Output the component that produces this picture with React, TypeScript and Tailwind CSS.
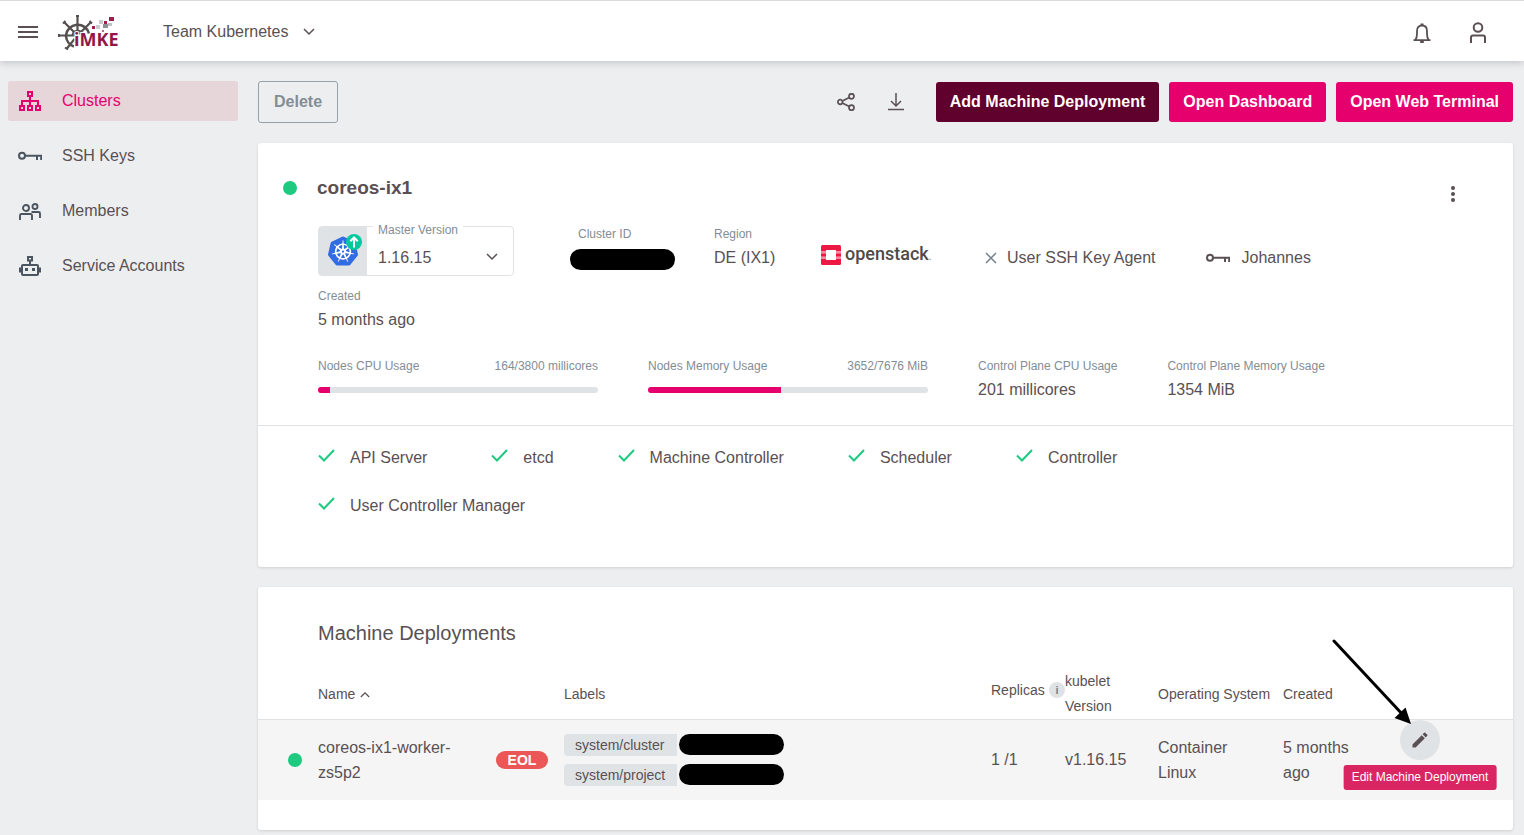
import type { ReactNode } from "react";
import { MdEdit } from "react-icons/md";
import { SiKubernetes } from "react-icons/si";

function Chevron({ className }: { className?: string }) {
  return (
    <svg viewBox="0 0 12 8" className={className} fill="none" stroke="currentColor" strokeWidth="1.5" aria-hidden="true">
      <path d="M1 1l5 5 5-5" />
    </svg>
  );
}

function KeyIcon() {
  return (
    <svg width="24" height="10" viewBox="0 0 24 10" fill="none" stroke="currentColor" strokeWidth="2" aria-hidden="true">
      <circle cx="4" cy="4.8" r="3" />
      <path d="M7 4.8h16.2V9M19 4.8V9" />
    </svg>
  );
}

function ClustersIcon() {
  return (
    <svg width="22" height="20" viewBox="0 0 22 20" fill="none" stroke="currentColor" strokeWidth="2" aria-hidden="true">
      <rect x="9" y="1" width="4" height="4" />
      <path d="M11 5v10M3 15v-5h16v5" />
      <rect x="1" y="15" width="4" height="4" />
      <rect x="9" y="15" width="4" height="4" />
      <rect x="17" y="15" width="4" height="4" />
    </svg>
  );
}

function MembersIcon() {
  return (
    <svg width="22" height="17" viewBox="0 0 22 17" fill="none" stroke="currentColor" strokeWidth="1.900" aria-hidden="true">
      <circle cx="7" cy="5" r="3" />
      <circle cx="16" cy="3.500" r="2.500" />
      <path d="M1 17v-4.500Q1 11 2.500 11h9Q13 11 13 12.500V17M12.500 9H19.500Q21 9 21 10.500V15" />
    </svg>
  );
}

function RobotIcon() {
  return (
    <svg width="22" height="20" viewBox="0 0 22 20" fill="none" stroke="currentColor" strokeWidth="2" aria-hidden="true">
      <rect x="9" y="1" width="4" height="3.500" />
      <path d="M11 5v4" />
      <rect x="3" y="9" width="16" height="10" rx="1" />
      <path d="M1 11.500v5M21 11.500v5" />
      <path d="M6 13.500h3M13 13.500h3" strokeWidth="3" />
    </svg>
  );
}

function CheckIcon() {
  return (
    <svg width="17" height="13" viewBox="0 0 17 13" fill="none" stroke="#1ec980" strokeWidth="2" aria-hidden="true">
      <path d="M1 6.500l5 5L16 1" />
    </svg>
  );
}

function Logo() {
  return (
    <svg width="62" height="38" viewBox="0 0 62 38" role="img" aria-label="iMKE">
      <g fill="none" stroke="#55504f">
        <path
          d="M31 19.500A11.700 11.700 0 0 0 8 21.500a11.700 11.700 0 0 0 8 11"
          strokeWidth="2.600"
        />
        <path d="M19.500 1v19M6 8l13.500 13.500M33 8L21 20M0 21.500h17M8.500 35l8-10" strokeWidth="2.200" />
        <path d="M18 2h3M5 9.500L7.500 7M31.500 7L34 9.500M1 20v3M7 33.500l3 2" strokeWidth="2" />
        <path d="M14.500 22a5 5 0 0 1 9.500-2.500" strokeWidth="1.800" />
      </g>
      <rect x="51" y="3" width="5" height="4" fill="#9c1f4e" />
      <rect x="41" y="6" width="4" height="4" fill="#c9cbcc" />
      <rect x="46" y="7" width="3" height="3" fill="#9c1f4e" />
      <rect x="50" y="9" width="4" height="3" fill="#bfc2c4" />
      <rect x="45" y="10" width="5" height="4" fill="#8d9193" />
      <rect x="38" y="11" width="4" height="4" fill="#c9cbcc" />
      <rect x="34" y="12" width="3" height="3" fill="#9c1f4e" />
      <rect x="44" y="16" width="2" height="2" fill="#c2668a" />
      <text
        x="16"
        y="32"
        fill="#931746"
        stroke="#fff"
        strokeWidth="2"
        paintOrder="stroke"
        fontFamily="Open Sans, sans-serif"
        fontWeight="700"
        fontSize="18"
      >
        iMKE
      </text>
    </svg>
  );
}

function OpenstackMark() {
  return (
    <svg width="20" height="20" viewBox="0 0 20 20" className="shrink-0" aria-hidden="true">
      <rect width="20" height="20" rx="1.500" fill="#ed1844" />
      <path d="M0 7h20M0 13h20" stroke="#fff" strokeWidth="1" />
      <path d="M0 8.500h20M0 11.500h20" stroke="#f4617f" strokeWidth="1" />
      <rect x="5" y="5" width="10" height="10" fill="#fff" />
    </svg>
  );
}

const navItems: { label: string; icon: ReactNode; active?: boolean }[] = [
  { label: "Clusters", icon: <ClustersIcon />, active: true },
  { label: "SSH Keys", icon: <KeyIcon /> },
  { label: "Members", icon: <MembersIcon /> },
  { label: "Service Accounts", icon: <RobotIcon /> },
];

const services = ["API Server", "etcd", "Machine Controller", "Scheduler", "Controller", "User Controller Manager"];

function Field({ label, children }: { label: string; children: ReactNode }) {
  return (
    <div>
      <div className="text-xs leading-4 text-[#838d96]">{label}</div>
      <div className="mt-1 leading-6">{children}</div>
    </div>
  );
}

function Usage({ label, used, total, unit }: { label: string; used: number; total: number; unit: string }) {
  return (
    <div className="w-[280px]">
      <div className="flex justify-between text-xs leading-4 text-[#838d96]">
        <span>{label}</span>
        <span>
          {used}/{total} {unit}
        </span>
      </div>
      <div className="mt-[13px] h-1.5 overflow-hidden rounded-sm bg-[#dfe3e6]">
        <div className="h-full bg-[#e5006d]" style={{ width: `${(used / total) * 100}%` }} />
      </div>
    </div>
  );
}

function Header() {
  return (
    <header className="relative flex h-[61px] items-center border-t border-[#d9d9de] bg-white pt-0.5 pr-[37px] pl-[18px] shadow-[0_1px_8px_rgba(0,0,0,0.22)]">
      <button aria-label="Toggle menu">
        <svg width="20" height="12" viewBox="0 0 20 12" stroke="currentColor" strokeWidth="2" aria-hidden="true">
          <path d="M0 1h20M0 6h20M0 11h20" />
        </svg>
      </button>
      <a href="#home" className="mt-0.5 ml-5" aria-label="Home">
        <Logo />
      </a>
      <button className="ml-[43px] flex items-center gap-[15px]">
        Team Kubernetes
        <Chevron className="h-2 w-3" />
      </button>
      <div className="ml-auto flex items-center gap-[38px] pt-0.5">
        <button aria-label="Notifications">
          <svg width="18" height="20" viewBox="0 0 18 20" fill="none" stroke="currentColor" aria-hidden="true">
            <path
              d="M.5 17.200h17M2.300 17c1.400-2 1.700-3.500 1.700-6V8c0-3.500 1.800-5.500 5-5.500s5 2 5 5.500v3c0 2.500.3 4 1.700 6"
              strokeWidth="1.800"
            />
            <path d="M7.500 1.500h3M7.200 19h3.600" strokeWidth="2" />
          </svg>
        </button>
        <button aria-label="Account">
          <svg width="18" height="22" viewBox="0 0 18 22" fill="none" stroke="currentColor" strokeWidth="2" aria-hidden="true">
            <circle cx="9" cy="5.500" r="4.300" />
            <path d="M2 21v-5.500Q2 13.500 4 13.500h10q2 0 2 2V21" />
          </svg>
        </button>
      </div>
    </header>
  );
}

function ClusterCard() {
  return (
    <section className="mt-5 rounded-[3px] bg-white pb-[49px] shadow-[0_1px_3px_rgba(0,0,0,0.13)]">
      <div className="flex items-center pt-[30px] pr-[50px] pl-[25px]">
        <span className="size-3.5 rounded-full bg-[#1ec980]" />
        <h1 className="ml-5 text-[19px] leading-[30px] font-bold">coreos-ix1</h1>
        <button aria-label="More actions" className="mt-3 ml-auto w-5">
          <svg width="20" height="18" viewBox="0 0 20 18" fill="currentColor" aria-hidden="true">
            <circle cx="10" cy="3" r="2" />
            <circle cx="10" cy="9" r="2" />
            <circle cx="10" cy="15" r="2" />
          </svg>
        </button>
      </div>

      <div className="mt-[23px] flex flex-wrap gap-x-[50px] gap-y-3 px-[60px]">
        <div className="relative flex h-[50px] w-[196px] rounded border border-[#dfe3e6]">
          <div className="flex w-12 items-center justify-center bg-[#dfe3e6]">
            <div className="relative">
              <span className="absolute inset-[6px] rounded-full bg-white" />
              <SiKubernetes className="relative size-[30px] text-[#326ce5]" />
              <svg width="16" height="16" viewBox="0 0 16 16" className="absolute -top-0.5 -right-1" aria-hidden="true">
                <circle cx="8" cy="8" r="8" fill="#00c9a0" />
                <path d="M8 13.500V4M4.300 7.200L8 3.500l3.700 3.700" fill="none" stroke="#fff" strokeWidth="2" />
              </svg>
            </div>
          </div>
          <label htmlFor="version" className="absolute -top-[3px] left-[54px] bg-white px-[5px] text-xs leading-3 text-[#838d96]">
            Master Version
          </label>
          <select id="version" className="flex-1 appearance-none bg-transparent pt-3.5 pl-[11px] outline-none">
            <option>1.16.15</option>
          </select>
          <Chevron className="pointer-events-none absolute top-[26px] right-[15px] h-2 w-3" />
        </div>
        <div className="w-[100px]">
          <div className="pl-3.5 text-xs leading-4 text-[#838d96]">Cluster ID</div>
          <div className="mt-[7px] ml-1.5 h-[21px] w-[105px] rounded-full bg-black" />
        </div>
        <div className="w-[57px] whitespace-nowrap">
          <Field label="Region">DE (IX1)</Field>
        </div>
        <div className="flex h-[50px] w-[114px] items-center gap-1 pt-2">
          <OpenstackMark />
          <span className="font-[Roboto,sans-serif] text-lg leading-6 font-medium text-[#504a48]">
            openstack<span className="text-[10px] text-[#a09c9a]">.</span>
          </span>
        </div>
        <div className="flex items-center gap-2.5 pt-3.5">
          <svg width="12" height="12" viewBox="0 0 12 12" stroke="#75828e" strokeWidth="1.500" aria-hidden="true">
            <path d="M1 1l10 10M11 1L1 11" />
          </svg>
          User SSH Key Agent
        </div>
        <div className="flex items-center gap-3 pt-3.5">
          <KeyIcon />
          Johannes
        </div>
        <Field label="Created">5 months ago</Field>
      </div>

      <div className="mt-[26px] flex flex-wrap gap-x-[50px] gap-y-6 px-[60px] pb-[23px]">
        <Usage label="Nodes CPU Usage" used={164} total={3800} unit="millicores" />
        <Usage label="Nodes Memory Usage" used={3652} total={7676} unit="MiB" />
        <Field label="Control Plane CPU Usage">201 millicores</Field>
        <Field label="Control Plane Memory Usage">1354 MiB</Field>
      </div>

      <ul className="flex flex-wrap gap-x-16 gap-y-6 border-t border-[#dfe3e6] pt-5 pr-[140px] pl-[60px]">
        {services.map((name) => (
          <li key={name} className="flex items-center gap-[15px] leading-6">
            <span className="pb-1.5">
              <CheckIcon />
            </span>
            {name}
          </li>
        ))}
      </ul>
    </section>
  );
}

function LabelChip({ name }: { name: string }) {
  return (
    <div className="flex items-center gap-0.5">
      <span className="h-[22px] min-w-[113px] rounded-l-sm bg-[#dfe3e6] pl-[11px] text-sm leading-[22px]">{name}</span>
      <span className="h-[21px] w-[105px] rounded-full bg-black" />
    </div>
  );
}

function MachineDeployments() {
  return (
    <section className="mt-5 rounded-[3px] bg-white py-[30px] shadow-[0_1px_3px_rgba(0,0,0,0.13)]">
      <h2 className="pl-[60px] text-xl leading-8">Machine Deployments</h2>
      <table className="mt-5 w-full table-fixed border-collapse text-left leading-[25px]">
        <colgroup>
          <col className="w-[60px]" />
          <col className="w-[178px]" />
          <col className="w-[68px]" />
          <col />
          <col className="w-[74px]" />
          <col className="w-[93px]" />
          <col className="w-[125px]" />
          <col className="w-[98px]" />
          <col className="w-[132px]" />
        </colgroup>
        <thead>
          <tr className="border-b border-[#dfe3e6] text-sm leading-[25px] [&>th]:p-0 [&>th]:font-normal">
            <th />
            <th>
              <button className="flex items-center gap-[5px]">
                Name
                <Chevron className="h-[7px] w-2.5 rotate-180" />
              </button>
            </th>
            <th />
            <th>Labels</th>
            <th>
              <div className="flex items-center justify-between pb-2">
                Replicas
                <span className="flex size-4 items-center justify-center rounded-full bg-[#dfe3e6] text-[11px] font-bold text-[#75828e]">i</span>
              </div>
            </th>
            <th>
              <div className="w-16">kubelet Version</div>
            </th>
            <th>Operating System</th>
            <th>Created</th>
            <th />
          </tr>
        </thead>
        <tbody>
          <tr className="h-20 bg-[#f5f5f5] [&>td]:p-0">
            <td>
              <div className="ml-[30px] size-3.5 rounded-full bg-[#1ec980]" />
            </td>
            <td>
              <div className="w-[140px]">coreos-ix1-worker-zs5p2</div>
            </td>
            <td>
              <div className="w-[52px] rounded-full bg-[#eb5757] text-center text-sm leading-[18px] font-bold text-white">EOL</div>
            </td>
            <td>
              <div className="flex flex-col gap-2">
                <LabelChip name="system/cluster" />
                <LabelChip name="system/project" />
              </div>
            </td>
            <td>1 /1</td>
            <td>v1.16.15</td>
            <td>
              <div className="w-20">Container Linux</div>
            </td>
            <td>
              <div className="w-20">5 months ago</div>
            </td>
            <td className="align-top">
              <div className="relative ml-[19px] size-10">
                <button aria-label="Edit" aria-describedby="edit-tip" className="flex size-10 items-center justify-center rounded-full bg-[#dfe3e6]">
                  <MdEdit className="size-5" />
                </button>
                <svg
                  width="80"
                  height="86"
                  viewBox="0 0 80 86"
                  className="pointer-events-none absolute right-[28px] bottom-[35px] max-w-none text-black"
                  aria-hidden="true"
                >
                  <path d="M2 2l70 75" stroke="currentColor" strokeWidth="3" strokeLinecap="round" />
                  <path d="M79 85l-16.500-6 11-10.500z" fill="currentColor" />
                </svg>
                <div
                  id="edit-tip"
                  role="tooltip"
                  className="absolute top-[45px] left-1/2 -translate-x-1/2 rounded-[3px] bg-[#d92662] px-2 text-xs leading-[25px] whitespace-nowrap text-white"
                >
                  Edit Machine Deployment
                </div>
              </div>
            </td>
          </tr>
        </tbody>
      </table>
    </section>
  );
}

export default function App() {
  return (
    <div className="min-h-screen bg-[#edeef0] font-['Liberation_Sans',Arial,sans-serif] text-base text-[#5a5054]">
      <Header />
      <div className="flex">
        <nav className="flex w-[238px] shrink-0 flex-col gap-[15px] pt-5 pl-2">
          {navItems.map((item) => (
            <a
              key={item.label}
              href="#nav"
              className={
                item.active
                  ? "flex h-10 items-center rounded-[3px] bg-[#e6d5d9] text-[#e5006d]"
                  : "flex h-10 items-center rounded-[3px]"
              }
            >
              <span className={item.active ? "flex w-11 justify-center" : "flex w-11 justify-center text-[#4b555f]"}>{item.icon}</span>
              <span className="pl-2.5">{item.label}</span>
            </a>
          ))}
        </nav>
        <main className="min-w-0 flex-1 pt-5 pr-[11px] pb-[5px] pl-5">
          <div className="flex items-center font-bold">
            <button className="h-[42px] rounded-[3px] border border-[#97a1aa] px-[15px] text-[#838d96]">Delete</button>
            <button aria-label="Share" className="mr-[33px] ml-auto">
              <svg width="18" height="18" viewBox="0 0 18 18" fill="none" stroke="currentColor" strokeWidth="1.700" aria-hidden="true">
                <circle cx="3.200" cy="9" r="2.300" />
                <circle cx="14.500" cy="3.300" r="2.500" />
                <circle cx="14.500" cy="14.700" r="2.500" />
                <path d="M5.300 8l7-3.500M5.300 10l7 3.500" />
              </svg>
            </button>
            <button aria-label="Download" className="mr-8">
              <svg width="16" height="18" viewBox="0 0 16 18" fill="none" stroke="currentColor" strokeWidth="1.500" aria-hidden="true">
                <path d="M8 0v13M3 8l5 5 5-5M0 16.500h16" />
              </svg>
            </button>
            <div className="flex gap-2.5 text-white">
              <button className="h-10 rounded-[3px] bg-[#60002c] px-3.5">Add Machine Deployment</button>
              <button className="h-10 rounded-[3px] bg-[#e5006d] px-3.5">Open Dashboard</button>
              <button className="h-10 rounded-[3px] bg-[#e5006d] px-3.5">Open Web Terminal</button>
            </div>
          </div>
          <ClusterCard />
          <MachineDeployments />
        </main>
      </div>
    </div>
  );
}
